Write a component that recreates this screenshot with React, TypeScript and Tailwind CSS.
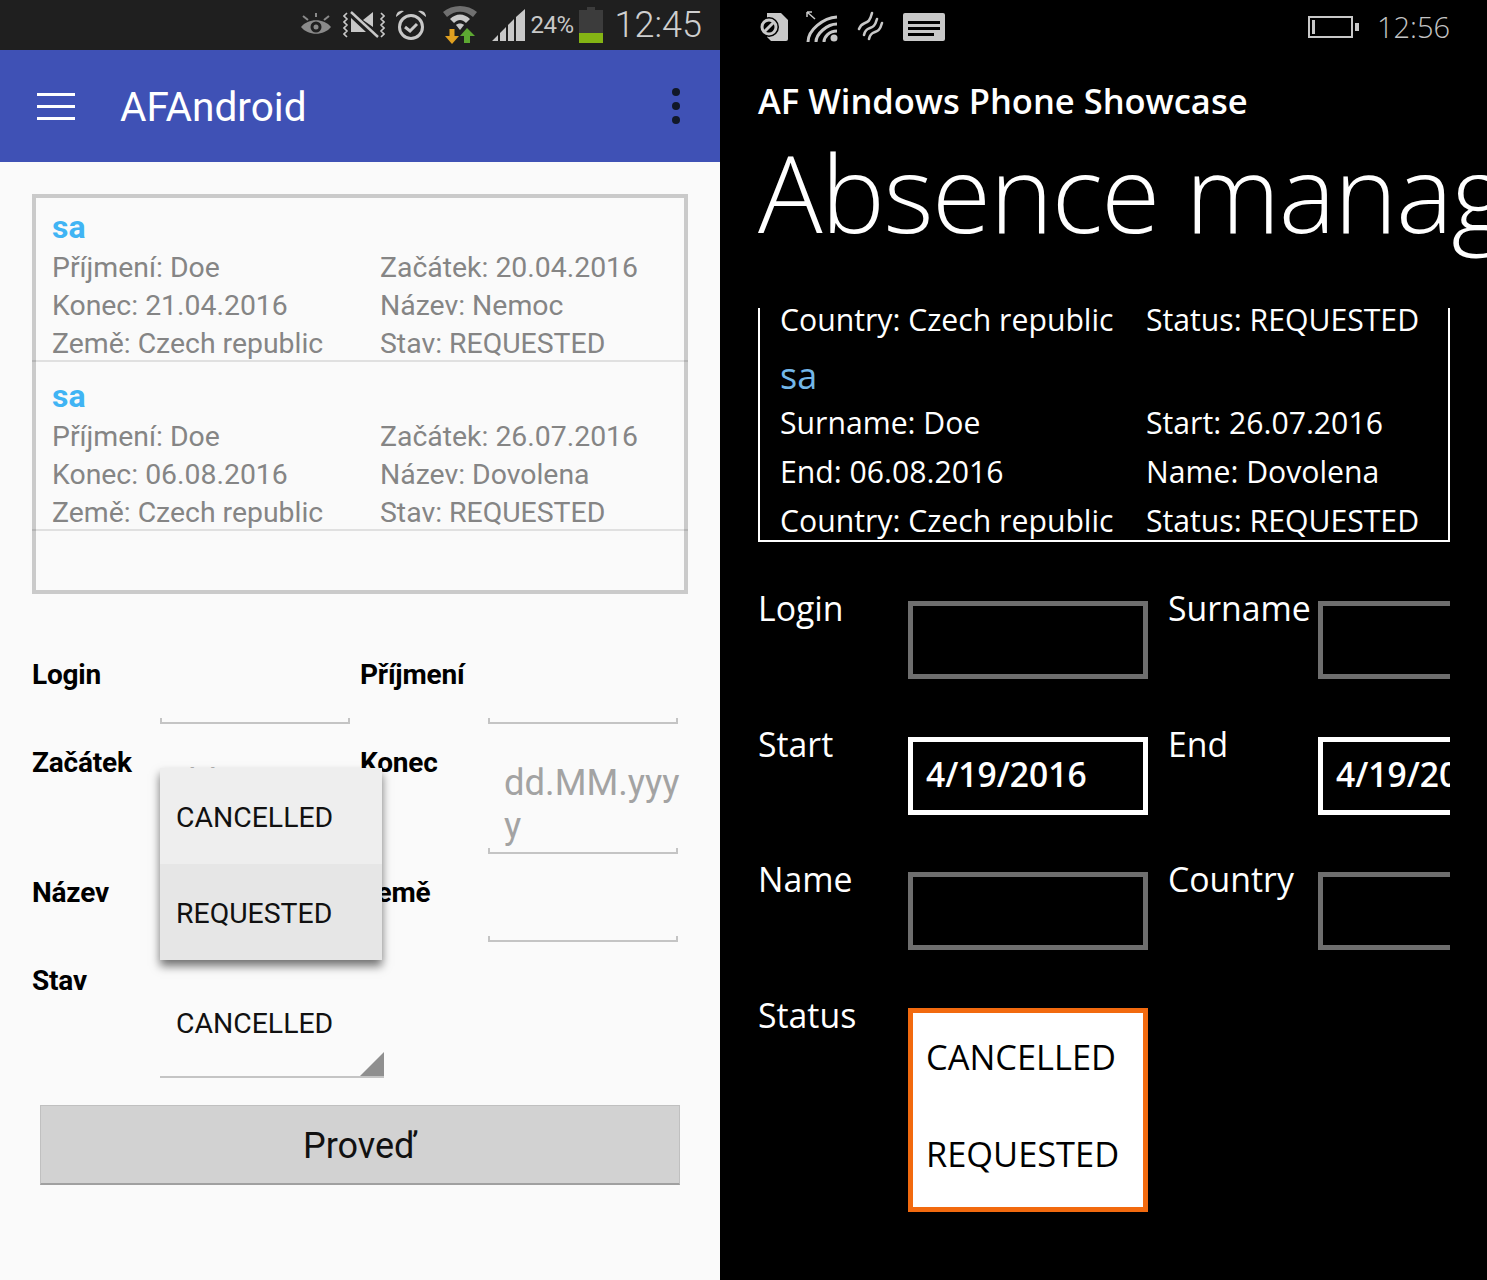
import React from 'react';

const roboto = { fontFamily: 'Roboto, sans-serif' };

const absences = [
  { start: '20.04.2016', end: '21.04.2016', name: 'Nemoc' },
  { start: '26.07.2016', end: '06.08.2016', name: 'Dovolena' },
];

const Underline = ({ width = 'w-[190px]' }: { width?: string }) => (
  <div className={`absolute bottom-0 left-0 h-[6px] border-x-2 border-b-2 border-[#c4c4c4] ${width}`} />
);

const AndroidField = ({ placeholder }: { placeholder?: boolean }) => (
  <div className="relative h-full w-[190px] shrink-0">
    {placeholder && (
      <div className="pl-4 pt-[21px] text-[36.4px] leading-[43px] text-[#a3a3a3]">
        dd.MM.yyy
        <br />y
      </div>
    )}
    <Underline />
  </div>
);

const AndroidRow = ({
  heightClass,
  left,
  right,
  leftPlaceholder,
  rightPlaceholder,
}: {
  heightClass: string;
  left: string;
  right: string;
  leftPlaceholder?: boolean;
  rightPlaceholder?: boolean;
}) => (
  <div className={`flex ${heightClass}`}>
    <div className="w-[128px] shrink-0 pt-[7px] text-[28px] leading-[32px] font-bold tracking-[-0.2px] text-black">{left}</div>
    <AndroidField placeholder={leftPlaceholder} />
    <div className="ml-[10px] w-[128px] shrink-0 pt-[7px] text-[28px] leading-[32px] font-bold tracking-[-0.2px] text-black">{right}</div>
    <AndroidField placeholder={rightPlaceholder} />
  </div>
);

const AndroidStatusIcons = () => (
  <div className="flex items-center">
    {/* eye */}
    <svg width="34" height="28" viewBox="0 0 34 28" className="mr-[10px] ml-[2px]" fill="none">
      <path d="M2 16 C9 7 25 7 32 16 C25 25 9 25 2 16Z" fill="#8a8a8a" />
      <circle cx="17" cy="16" r="5.5" fill="#1f1f1f" />
      <circle cx="17" cy="16" r="2.5" fill="#8a8a8a" />
      <path d="M4 5l5 4M30 5l-5 4M17 2v4" stroke="#8a8a8a" strokeWidth="2" />
    </svg>
    {/* vibrate muted */}
    <svg width="42" height="28" viewBox="0 0 42 28" className="mr-[11px]" fill="none">
      <path d="M30 1 L20 9 L30 16Z M8 7 L23 21 H8Z" fill="#c8c8c8" />
      <path d="M8 1 L35 26" stroke="#c8c8c8" strokeWidth="2.4" />
      <path d="M4 2l-3 3 3 3-3 3 3 3-3 3 3 3-3 3 3 3M38 2l3 3-3 3 3 3-3 3 3 3-3 3 3 3-3 3" stroke="#c8c8c8" strokeWidth="1.6" />
    </svg>
    {/* alarm */}
    <svg width="34" height="34" viewBox="0 0 34 34" className="mr-[14px] -ml-[2px]" fill="none">
      <circle cx="17" cy="19" r="11.5" stroke="#c8c8c8" strokeWidth="3" />
      <path d="M11 19l5 4 7-7" stroke="#c8c8c8" strokeWidth="3" />
      <path d="M2 9a6 6 0 0 1 8-6zM32 9a6 6 0 0 0-8-6z" fill="#c8c8c8" />
    </svg>
    {/* wifi with arrows */}
    <svg width="36" height="40" viewBox="0 0 36 40" className="mr-[14px]" fill="none">
      <path d="M1 7 C10 -1 26 -1 35 7 L31 12 C23 5 13 5 5 12Z" fill="#707070" />
      <path d="M8 14 C14 8 22 8 28 14 L24 18 C20 14 16 14 12 18Z" fill="#c8c8c8" />
      <path d="M14 20 C16 18 20 18 22 20 L18 25Z" fill="#c8c8c8" />
      <path d="M10 39 L3 31 H7.5 V24 H12.5 V31 H17 Z" fill="#e0a020" />
      <path d="M25 23 L33 31 H28 V38 H22 V31 H18 Z" fill="#5da832" />
    </svg>
    {/* signal */}
    <svg width="33" height="32" viewBox="0 0 33 32" className="mr-[6px]">
      <path d="M0 32 L6 26 V32Z M8 32 V24 L14 18 V32Z M16 32 V16 L22 10 V32Z M24 32 V8 L33 0 V32Z" fill="#c8c8c8" />
    </svg>
    <div className="mr-[5px] text-[24px] leading-none tracking-[-0.5px] text-[#c8c8c8]">24%</div>
    {/* battery */}
    <svg width="24" height="36" viewBox="0 0 24 36" className="mr-[12px]">
      <rect x="8" y="0" width="8" height="3" fill="#3c3c3c" />
      <rect x="0" y="3" width="24" height="33" fill="#3c3c3c" />
      <rect x="0" y="26" width="24" height="10" fill="#84b414" />
    </svg>
    <div className="text-[36px] leading-none font-light text-[#cfcfcf]">12:45</div>
  </div>
);

const AndroidPanel = () => (
  <div className="relative h-[1280px] w-[720px] shrink-0 bg-[#fafafa]" style={roboto}>
    <div className="flex h-[50px] items-center justify-end bg-[#1f1f1f] pr-[18px]">
      <AndroidStatusIcons />
    </div>

    <div className="flex h-[112px] items-center bg-[#3f51b5] pl-[37px] pr-[40px]">
      <div className="flex w-[38px] flex-col gap-[9px]">
        <div className="h-[3px] bg-white" />
        <div className="h-[3px] bg-white" />
        <div className="h-[3px] bg-white" />
      </div>
      <div className="ml-[45px] flex-1 pt-[3px] text-[40.6px] leading-none text-white">AFAndroid</div>
      <div className="flex flex-col gap-[6px]">
        <div className="h-[8px] w-[8px] rounded-full bg-[#111827]" />
        <div className="h-[8px] w-[8px] rounded-full bg-[#111827]" />
        <div className="h-[8px] w-[8px] rounded-full bg-[#111827]" />
      </div>
    </div>

    <div className="mx-[32px] mt-[32px] h-[400px] border-4 border-[#cacaca]">
      <div className="-mt-[5px]">
        {absences.map((a) => (
          <div key={a.start} className="-mx-[4px] h-[169px] border-b-2 border-black/10 px-[20px]">
            <div className="h-[56px] pt-[16px] text-[32px] leading-[36px] font-bold text-[#40b4f4]">sa</div>
            <div className="grid grid-cols-[328px_1fr] text-[28.4px] leading-[38px] text-[#858585]">
              <div>Příjmení: Doe</div>
              <div>Začátek: {a.start}</div>
              <div>Konec: {a.end}</div>
              <div>Název: {a.name}</div>
              <div>Země: Czech republic</div>
              <div>Stav: REQUESTED</div>
            </div>
          </div>
        ))}
      </div>
    </div>

    <div className="ml-[32px] mt-[58px] flex flex-col gap-[16px]">
      <AndroidRow heightClass="h-[72px]" left="Login" right="Příjmení" />
      <AndroidRow heightClass="h-[114px]" left="Začátek" right="Konec" leftPlaceholder rightPlaceholder />
      <AndroidRow heightClass="h-[72px]" left="Název" right="Země" />
      <div className="flex h-[120px]">
        <div className="w-[128px] shrink-0 pt-[7px] text-[28px] leading-[32px] font-bold tracking-[-0.2px] text-black">Stav</div>
        <div className="relative h-full w-[224px] border-b-2 border-[#c4c4c4] pl-4 pt-[48px] text-[28.4px] leading-[36px] text-[#111]">
          CANCELLED
          <div className="absolute bottom-0 right-0 h-0 w-0 border-b-[24px] border-l-[24px] border-b-[#8f8f8f] border-l-transparent" />
        </div>
      </div>
    </div>

    <div className="mx-[40px] mt-[27px] flex h-[80px] items-center justify-center border border-b-2 border-[#c0c0c0] border-b-[#a0a0a0] bg-[#d2d2d2] pt-[3px] text-[36px] text-[#111]">
      Proveď
    </div>

    {/* open dropdown */}
    <div className="absolute left-[160px] top-[768px] w-[222px] text-[28.4px] text-[#111] shadow-[0_6px_9px_rgba(0,0,0,0.55)]">
      <div className="flex h-[96px] items-center bg-[#eeeeee] pl-4 pt-[4px]">CANCELLED</div>
      <div className="flex h-[96px] items-center bg-[#e6e6e6] pl-4 pt-[4px]">REQUESTED</div>
    </div>
  </div>
);

const WindowsStatusIcons = () => (
  <div className="flex items-center">
    <svg width="32" height="32" viewBox="0 0 32 32" className="mr-[16px]" fill="none">
      <path d="M10 2 H24 L31 9 V28 a2 2 0 0 1-2 2 H14 L10 26Z" fill="#c8c8c8" />
      <circle cx="12" cy="16" r="10" fill="#000" />
      <circle cx="12" cy="16" r="7" stroke="#c8c8c8" strokeWidth="3" />
      <path d="M7 21 L17 11" stroke="#c8c8c8" strokeWidth="3" />
    </svg>
    <svg width="34" height="34" viewBox="0 0 34 34" className="mr-[17px]" fill="none">
      <path d="M3 32 C3 20 18 8 32 7" stroke="#c8c8c8" strokeWidth="3" />
      <path d="M11 32 C11 24 22 14 32 14" stroke="#c8c8c8" strokeWidth="3" />
      <path d="M19 32 C19 27 24 21 32 21" stroke="#c8c8c8" strokeWidth="3" />
      <circle cx="29" cy="28" r="3.5" fill="#c8c8c8" />
      <path d="M2 2 L10 9 M2 2 H7 M2 2 V7" stroke="#c8c8c8" strokeWidth="1.5" />
    </svg>
    <svg width="28" height="32" viewBox="0 0 28 32" className="mr-[19px]" fill="none">
      <path d="M3 18 C5 13 7 13 9 12 C12 11 14 10 16 2" stroke="#c8c8c8" strokeWidth="2.6" strokeLinecap="round" />
      <path d="M8 24 C9 19 11 18 14 17 C17 16 19 15 21 8" stroke="#c8c8c8" strokeWidth="2.6" strokeLinecap="round" />
      <path d="M13 28 C14 23 16 22 19 21 C22 20 24 19 26 12" stroke="#c8c8c8" strokeWidth="2.6" strokeLinecap="round" />
    </svg>
    <svg width="42" height="28" viewBox="0 0 42 28">
      <rect width="42" height="28" rx="2" fill="#c8c8c8" />
      <rect x="5" y="8" width="32" height="3" fill="#000" />
      <rect x="5" y="14" width="32" height="3" fill="#000" />
      <rect x="5" y="20" width="26" height="3" fill="#000" />
    </svg>
  </div>
);

const WinField = ({ value, variant = 'empty' }: { value?: string; variant?: 'empty' | 'date' }) => {
  const color = variant === 'date' ? 'border-white' : 'border-[#6e6e6e]';
  return (
    <div className={`flex h-[78px] w-[240px] shrink-0 items-center border-[5px] pb-[2px] pl-[13px] text-[33.6px] font-semibold whitespace-nowrap text-white ${color}`}>
      {value}
    </div>
  );
};

const WinFieldClipped = ({ value, variant = 'empty' }: { value?: string; variant?: 'empty' | 'date' }) => {
  const color = variant === 'date' ? 'border-white' : 'border-[#6e6e6e]';
  return (
    <div className="w-[132px] shrink-0 overflow-hidden">
      <div className={`flex h-[78px] w-[240px] items-center border-[5px] pb-[2px] pl-[13px] text-[33.6px] font-semibold whitespace-nowrap text-white ${color}`}>
        {value}
      </div>
    </div>
  );
};

const WinRow = ({ left, right, value, variant }: { left: string; right: string; value?: string; variant?: 'empty' | 'date' }) => (
  <div className="flex">
    <div className="-mt-[15px] w-[150px] shrink-0 pb-[2px] text-[33.8px] leading-[44px] text-white">{left}</div>
    <WinField value={value} variant={variant} />
    <div className="ml-[20px] -mt-[15px] w-[150px] shrink-0 text-[33.8px] leading-[44px] whitespace-nowrap text-white">{right}</div>
    <WinFieldClipped value={value} variant={variant} />
  </div>
);

const WindowsPanel = () => (
  <div className="h-[1280px] flex-1 overflow-hidden bg-black pl-[38px]" style={{ fontFamily: '"Open Sans", sans-serif' }}>
    <div className="flex h-[50px] items-center pr-[37px] pt-[3px]">
      <div className="-ml-[1px] flex-1">
        <WindowsStatusIcons />
      </div>
      <svg width="52" height="22" viewBox="0 0 52 22" className="mr-[17px]" fill="none">
        <rect x="1" y="1" width="43" height="20" stroke="#c8c8c8" strokeWidth="2" />
        <rect x="4" y="4" width="3" height="14" fill="#c8c8c8" />
        <rect x="47" y="7" width="4" height="8" fill="#c8c8c8" />
      </svg>
      <div className="text-[29px] leading-none font-light text-[#c4c4c4]">12:56</div>
    </div>

    <div className="mt-[27px] text-[34.5px] leading-[48px] font-semibold whitespace-nowrap text-white">AF Windows Phone Showcase</div>
    <div className="-mt-[2px] text-[107.5px] leading-[136px] font-light tracking-[-1.5px] whitespace-nowrap text-white">Absence manag</div>

    <div className="mt-[49px] h-[234px] w-[692px] border-x-2 border-b-2 border-white pl-[20px] text-[30.2px] text-white">
      <div className="grid h-[24px] grid-cols-[366px_1fr] leading-[24px]">
        <div>Country: Czech republic</div>
        <div>Status: REQUESTED</div>
      </div>
      <div className="mt-[24px] text-[36px] leading-[40px] text-[#73b7e9]">sa</div>
      <div className="mt-[2px] grid grid-cols-[366px_1fr] leading-[49px]">
        <div>Surname: Doe</div>
        <div>Start: 26.07.2016</div>
        <div>End: 06.08.2016</div>
        <div>Name: Dovolena</div>
        <div>Country: Czech republic</div>
        <div>Status: REQUESTED</div>
      </div>
    </div>

    <div className="mt-[59px] flex w-[692px] flex-col gap-[57.5px]">
      <WinRow left="Login" right="Surname" />
      <WinRow left="Start" right="End" value="4/19/2016" variant="date" />
      <WinRow left="Name" right="Country" />
      <div className="flex">
        <div className="-mt-[15px] w-[150px] shrink-0 text-[33.8px] leading-[44px] text-white">Status</div>
        <div className="w-[240px] border-[5px] border-[#f26a0f] bg-white pl-[13px] text-[34.4px] text-black">
          <div className="flex h-[97px] items-center pb-[9px]">CANCELLED</div>
          <div className="flex h-[97px] items-center pb-[9px]">REQUESTED</div>
        </div>
      </div>
    </div>
  </div>
);

export default function App() {
  return (
    <div className="flex h-[1280px] w-[1487px] overflow-hidden">
      <AndroidPanel />
      <WindowsPanel />
    </div>
  );
}
